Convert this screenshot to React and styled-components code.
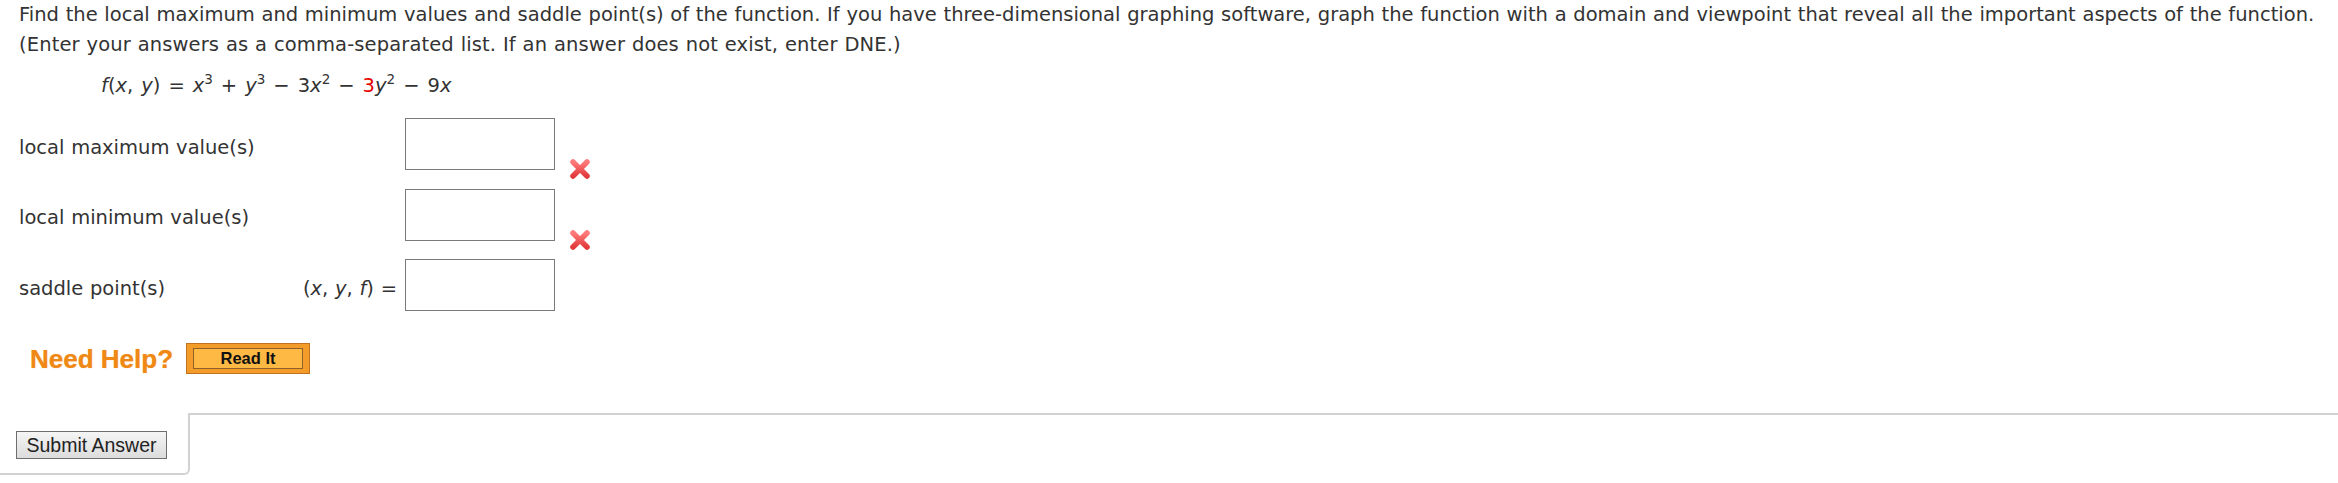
import React from 'react';
import styled, { createGlobalStyle } from 'styled-components';

const GlobalStyle = createGlobalStyle`
  html, body {
    margin: 0;
    padding: 0;
    background: #fff;
  }
  body {
    font-family: "DejaVu Sans", Verdana, sans-serif;
    color: #333;
  }
`;

const Page = styled.div`
  width: 2338px;
  min-height: 483px;
`;

const Question = styled.div`
  padding-left: 19px;
  font-size: 19.5px;
  line-height: 30px;
  word-spacing: 0.5px;
`;

const PromptLine = styled.div`
  white-space: nowrap;
  letter-spacing: ${({ $tracking }) => $tracking || 0}px;
`;

const Formula = styled.div`
  margin-top: 11px;
  padding-left: 82px;
  white-space: nowrap;
  word-spacing: 1.8px;
`;

const Var = styled.i`
  font-style: italic;
`;

const Sup = styled.sup`
  font-size: 13.5px;
  line-height: 0;
  vertical-align: 8px;
`;

const Red = styled.span`
  color: #e60000;
`;

const AnswerList = styled.div`
  margin-top: 17px;
  display: flex;
  flex-direction: column;
  gap: 18.5px;
`;

const AnswerRow = styled.div`
  display: flex;
  align-items: center;
  height: 52px;
`;

const Label = styled.div`
  flex: 0 0 279px;
  padding-top: 7px;
`;

const Prefix = styled.div`
  flex: 0 0 107px;
  box-sizing: border-box;
  padding-right: 8px;
  padding-top: 7px;
  text-align: right;
`;

const AnswerBox = styled.input`
  box-sizing: border-box;
  width: 150px;
  height: 52px;
  margin: 0;
  border: 1px solid #7a7a7a;
  background: #fff;
  font: inherit;
`;

const Mark = styled.span`
  display: flex;
  align-self: flex-end;
  margin-left: 14px;
  margin-bottom: -10px;
`;

const HelpRow = styled.div`
  margin-top: 32px;
  padding-left: 11px;
  display: flex;
  align-items: center;
  gap: 13px;
`;

const NeedHelp = styled.span`
  font-family: "Liberation Sans", Arial, sans-serif;
  font-weight: bold;
  font-size: 26px;
  line-height: 30px;
  word-spacing: 0;
  color: #ef8814;
  text-shadow: 0 0 1px rgba(239, 136, 20, 0.6);
`;

const ReadIt = styled.button`
  box-sizing: border-box;
  width: 124px;
  height: 31px;
  margin: 0;
  padding: 4px 6px;
  display: flex;
  background: #f39c2a;
  border: 1px solid #c0721f;
  cursor: pointer;
`;

const ReadItFace = styled.span`
  flex: 1;
  display: flex;
  align-items: center;
  justify-content: center;
  background: #fdb944;
  border: 1px solid #8f6028;
  font-family: "Liberation Sans", Arial, sans-serif;
  font-weight: bold;
  font-size: 16.5px;
  color: #111;
`;

const Footer = styled.div`
  margin-top: 39px;
  display: flex;
`;

const SubmitTab = styled.div`
  box-sizing: border-box;
  width: 190px;
  height: 62px;
  padding: 18px 0 0 16px;
  border-right: 2px solid #d2d2d2;
  border-bottom: 2px solid #d2d2d2;
  border-bottom-right-radius: 6px;
`;

const Filler = styled.div`
  flex: 1;
  border-top: 2px solid #d2d2d2;
`;

const SubmitButton = styled.button`
  box-sizing: border-box;
  width: 151px;
  height: 28px;
  margin: 0;
  padding: 0;
  font-family: "Liberation Sans", Arial, sans-serif;
  font-size: 19.5px;
  color: #222;
  background: linear-gradient(#f5f5f5, #dcdcdc);
  border: 1px solid #6e6e6e;
  cursor: pointer;
`;

const WrongMark = () => (
  <svg width="22" height="22" viewBox="0 0 22 22">
    <defs>
      <linearGradient id="xg" x1="0" y1="0" x2="0" y2="1">
        <stop offset="0" stopColor="#ff7b7b" />
        <stop offset="1" stopColor="#e23b3b" />
      </linearGradient>
    </defs>
    <path
      d="M4 4 L18 18 M18 4 L4 18"
      stroke="url(#xg)"
      strokeWidth="5.5"
      strokeLinecap="round"
      fill="none"
    />
  </svg>
);

const answers = [
  { label: 'local maximum value(s)', wrong: true },
  { label: 'local minimum value(s)', wrong: true },
  {
    label: 'saddle point(s)',
    prefix: (
      <>
        (<Var>x</Var>, <Var>y</Var>, <Var>f</Var>) =
      </>
    ),
  },
];

export default function App() {
  return (
    <Page>
      <GlobalStyle />
      <Question>
        <PromptLine>
          Find the local maximum and minimum values and saddle point(s) of the
          function. If you have three-dimensional graphing software, graph the
          function with a domain and viewpoint that reveal all the important
          aspects of the function.
        </PromptLine>
        <PromptLine $tracking={0.12}>
          (Enter your answers as a comma-separated list. If an answer does not
          exist, enter DNE.)
        </PromptLine>
        <Formula>
          <Var>f</Var>(<Var>x</Var>, <Var>y</Var>) = <Var>x</Var>
          <Sup>3</Sup> + <Var>y</Var>
          <Sup>3</Sup> − 3<Var>x</Var>
          <Sup>2</Sup> − <Red>3</Red>
          <Var>y</Var>
          <Sup>2</Sup> − 9<Var>x</Var>
        </Formula>

        <AnswerList>
          {answers.map((a) => (
            <AnswerRow key={a.label}>
              <Label>{a.label}</Label>
              <Prefix>{a.prefix}</Prefix>
              <AnswerBox type="text" />
              {a.wrong && (
                <Mark>
                  <WrongMark />
                </Mark>
              )}
            </AnswerRow>
          ))}
        </AnswerList>

        <HelpRow>
          <NeedHelp>Need Help?</NeedHelp>
          <ReadIt>
            <ReadItFace>Read It</ReadItFace>
          </ReadIt>
        </HelpRow>
      </Question>

      <Footer>
        <SubmitTab>
          <SubmitButton>Submit Answer</SubmitButton>
        </SubmitTab>
        <Filler />
      </Footer>
    </Page>
  );
}
